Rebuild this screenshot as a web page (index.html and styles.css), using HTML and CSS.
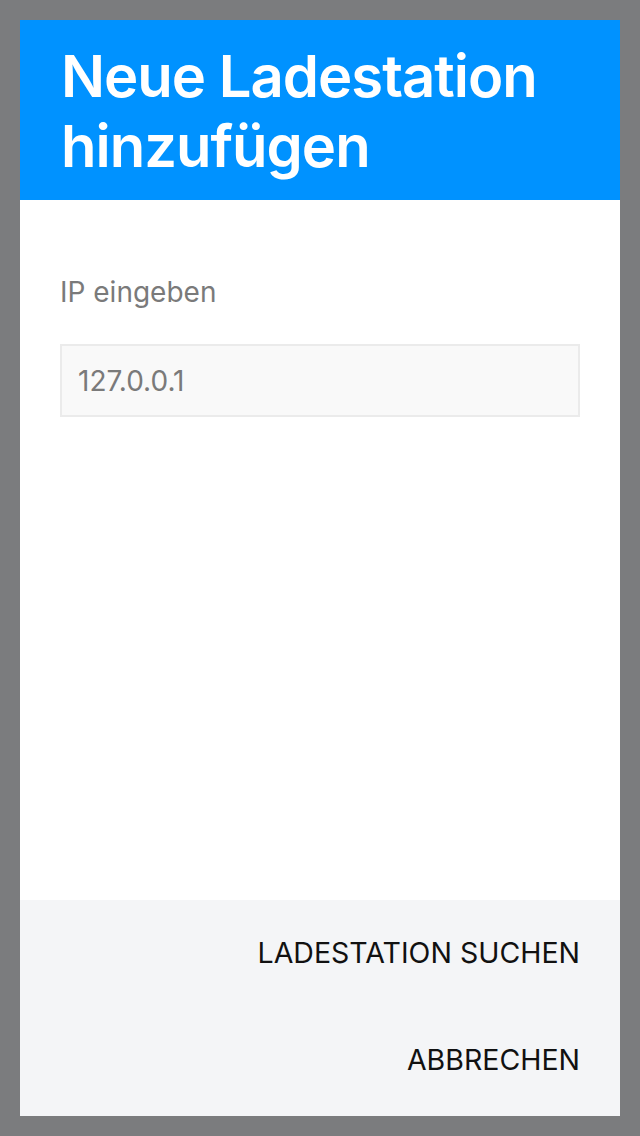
FILE: index.html
```html
<html><head>
  <meta charset="utf-8">
  <title>Neue Ladestation hinzufügen</title>
  <link rel="stylesheet" href="styles.css">
</head>
<body>
  <main class="dialog">
    <header class="dialog-header">
      <h1>Neue Ladestation hinzufügen</h1>
    </header>

    <section class="dialog-body">
      <label for="ip">IP eingeben</label>
      <input type="text" id="ip" name="ip" value="127.0.0.1">
    </section>

    <footer class="dialog-actions">
      <button type="button" class="action-button">Ladestation suchen</button>
      <button type="button" class="action-button">Abbrechen</button>
    </footer>
  </main>
</body></html>
```

FILE: styles.css
```css
body {
  margin: 0;
  padding: 20px;
  height: 100vh;
  box-sizing: border-box;
  background-color: #7b7c7e;
  font-family: Inter, "Liberation Sans", sans-serif;
}

.dialog {
  display: flex;
  flex-direction: column;
  height: 100%;
  background-color: #ffffff;
}

.dialog-header {
  background-color: #0092ff;
  height: 180px;
  box-sizing: border-box;
  padding: 21px 40px 0 41px;
}

.dialog-header h1 {
  margin: 0;
  color: #ffffff;
  font-size: 58px;
  font-weight: 600;
  line-height: 70px;
  letter-spacing: -1px;
}

.dialog-body {
  flex: 1;
  display: flex;
  flex-direction: column;
  padding: 77px 40px 0 40px;
}

.dialog-body label {
  color: #7a7a7a;
  font-size: 28px;
  line-height: 30px;
  margin-bottom: 37px;
}

.dialog-body input {
  height: 73px;
  box-sizing: border-box;
  padding: 0 16px;
  border: 2px solid #ebebeb;
  background-color: #f9f9f9;
  color: #7a7a7a;
  font-family: inherit;
  font-size: 28px;
  outline: none;
}

.dialog-actions {
  display: flex;
  flex-direction: column;
  align-items: flex-end;
  height: 216px;
  box-sizing: border-box;
  padding: 35px 40px 0 40px;
  background-color: #f4f5f7;
}

.action-button {
  padding: 0;
  height: 40px;
  margin-bottom: 72px;
  border: none;
  background: none;
  color: #111111;
  font-family: inherit;
  font-size: 28.5px;
  text-transform: uppercase;
  cursor: pointer;
}
```
